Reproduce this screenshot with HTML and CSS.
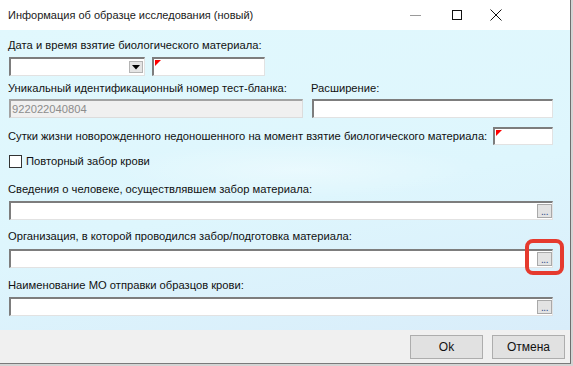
FILE: index.html
```html
<!DOCTYPE html>
<html lang="ru">
<head>
  <meta charset="UTF-8" />
  <title>Информация об образце исследования</title>
  <link rel="stylesheet" href="styles.css">
</head>
<body>
  <div class="window">
    <div class="titlebar">
      <span class="title">Информация об образце исследования (новый)</span>
      <div class="controls">
        <span class="ctl ctl-min">
          <svg width="11" height="11" viewBox="0 0 11 11"><path d="M0 5.5h11" stroke="#9a9a9a" stroke-width="1"/></svg>
        </span>
        <span class="ctl ctl-max">
          <svg width="10" height="10" viewBox="0 0 10 10"><rect x="0.5" y="0.5" width="9" height="9" fill="none" stroke="#111" stroke-width="1"/></svg>
        </span>
        <span class="ctl ctl-close">
          <svg width="12" height="12" viewBox="0 0 12 12"><path d="M0.5 0.5l11 11M11.5 0.5l-11 11" stroke="#111" stroke-width="1"/></svg>
        </span>
      </div>
    </div>

    <div class="content">
      <div class="label">Дата и время взятие биологического материала:</div>
      <div class="row row-date">
        <div class="field combo">
          <span class="drop-btn">
            <svg width="8" height="5" viewBox="0 0 8 5"><path d="M0 0h8L4 4.5z" fill="#000"/></svg>
          </span>
        </div>
        <div class="field time req"></div>
      </div>

      <div class="row row-ids">
        <div class="col col-num">
          <div class="label">Уникальный идентификационный номер тест-бланка:</div>
          <div class="field disabled">922022040804</div>
        </div>
        <div class="col col-ext">
          <div class="label">Расширение:</div>
          <div class="field"></div>
        </div>
      </div>

      <div class="row row-days">
        <span class="label">Сутки жизни новорожденного недоношенного на момент взятие биологического материала:</span>
        <div class="field days req"></div>
      </div>

      <div class="check-row">
        <span class="check"></span>
        <span class="label">Повторный забор крови</span>
      </div>

      <div class="group group-person">
        <div class="label">Сведения о человеке, осуществлявшем забор материала:</div>
        <div class="field lookup"><span class="dots-btn">...</span></div>
      </div>

      <div class="group group-org">
        <div class="label">Организация, в которой проводился забор/подготовка материала:</div>
        <div class="field lookup">
          <span class="dots-btn">...<span class="highlight"></span></span>
        </div>
      </div>

      <div class="group group-mo">
        <div class="label">Наименование МО отправки образцов крови:</div>
        <div class="field lookup"><span class="dots-btn">...</span></div>
      </div>
    </div>

    <div class="footer">
      <button class="btn">Ok</button>
      <button class="btn">Отмена</button>
    </div>
  </div>
</body>
</html>
```

FILE: styles.css
```css
body {
  margin: 0;
  width: 573px;
  height: 366px;
  overflow: hidden;
  background: #d4d4d4;
  font-family: 'Liberation Sans', Arial, sans-serif;
  font-size: 11.2px;
  color: #111;
}
.window {
  width: 570px;
  height: 363px;
  border-right: 1px solid #6e6e6e;
  border-bottom: 1px solid #7a7a7a;
  display: flex;
  flex-direction: column;
}
.titlebar {
  height: 30px;
  background: #fff;
  display: flex;
  align-items: center;
  padding-left: 8px;
}
.title {
  font-size: 11px;
  color: #1a1a1a;
}
.controls {
  margin-left: auto;
  display: flex;
  padding-right: 54px;
}
.ctl {
  display: flex;
  justify-content: center;
  align-items: center;
  height: 30px;
}
.ctl-min { width: 43px; }
.ctl-max { width: 39px; }
.ctl-close { width: 40px; }

.content {
  height: 300px;
  box-sizing: border-box;
  padding: 8px 17px 0 8px;
  background:
    radial-gradient(ellipse 260px 40px at 300px 140px, rgba(255,255,255,0.35), rgba(255,255,255,0) 70%),
    linear-gradient(170deg, #e1f8fd 0%, #def6fd 55%, #d9edfa 100%);
  display: flex;
  flex-direction: column;
}
.label {
  line-height: 14px;
  white-space: nowrap;
}
.field {
  box-sizing: border-box;
  height: 19px;
  margin-left: 1px;
  background: #fff;
  border-style: solid;
  border-width: 2px 1px 1px 2px;
  border-color: #7d7d7d #e2e2e2 #e2e2e2 #7d7d7d;
  display: flex;
}
.req::before {
  content: "";
  width: 0;
  height: 0;
  margin: 1px 0 0 1px;
  border-top: 6px solid #f00;
  border-right: 6px solid transparent;
}
.row {
  display: flex;
}
.row-date {
  margin-top: 5px;
  gap: 6px;
}
.combo {
  width: 136px;
  justify-content: flex-end;
  align-items: center;
  padding-right: 1px;
}
.drop-btn {
  width: 14px;
  height: 12px;
  box-sizing: border-box;
  background: #e4e4e4;
  border: 1px solid #b4b4b4;
  display: flex;
  justify-content: center;
  align-items: center;
}
.time {
  width: 113px;
}

.row-ids {
  margin-top: 5px;
  gap: 8px;
}
.col {
  display: flex;
  flex-direction: column;
  gap: 4px;
}
.col-num { width: 295px; }
.col-ext { flex: 1; }
.disabled {
  background: #f0f0f0;
  color: #8c8c8c;
  padding-left: 1px;
  align-items: center;
  border-color: #a3a3a3 #dcdcdc #dcdcdc #a3a3a3;
}

.row-days {
  margin-top: 9px;
  align-items: center;
}
.days {
  margin-left: auto;
  width: 60px;
  height: 18px;
}

.check-row {
  margin-top: 9px;
  display: flex;
  align-items: center;
  gap: 4px;
}
.check {
  width: 13px;
  height: 13px;
  box-sizing: border-box;
  margin-left: 1px;
  border: 1px solid #333;
  background: #fff;
}

.group {
  display: flex;
  flex-direction: column;
  gap: 5px;
}
.group-person { margin-top: 14px; }
.group-org { margin-top: 9px; gap: 6px; }
.group-mo { margin-top: 10px; }

.lookup {
  justify-content: flex-end;
  align-items: center;
  padding-right: 0;
}
.dots-btn {
  position: relative;
  width: 15px;
  height: 14px;
  box-sizing: border-box;
  background: #e3e3e3;
  border: 1px solid #a9a9a9;
  font-size: 10px;
  line-height: 14px;
  text-align: center;
  color: #2a4a8a;
  letter-spacing: -0.5px;
}
.highlight {
  position: absolute;
  left: -13px;
  top: -14px;
  width: 39px;
  height: 36px;
  box-sizing: border-box;
  border: 4px solid #e53a2e;
  border-radius: 8px;
}

.footer {
  height: 33px;
  background: #f0f0f0;
  display: flex;
  justify-content: flex-end;
  align-items: flex-start;
  gap: 9px;
  padding: 5px 5px 0 0;
  box-sizing: border-box;
}
.btn {
  width: 73px;
  height: 24px;
  background: #e1e1e1;
  border: 1px solid #adadad;
  font-family: 'Liberation Sans', Arial, sans-serif;
  font-size: 12px;
  color: #111;
  padding: 0;
}
```
